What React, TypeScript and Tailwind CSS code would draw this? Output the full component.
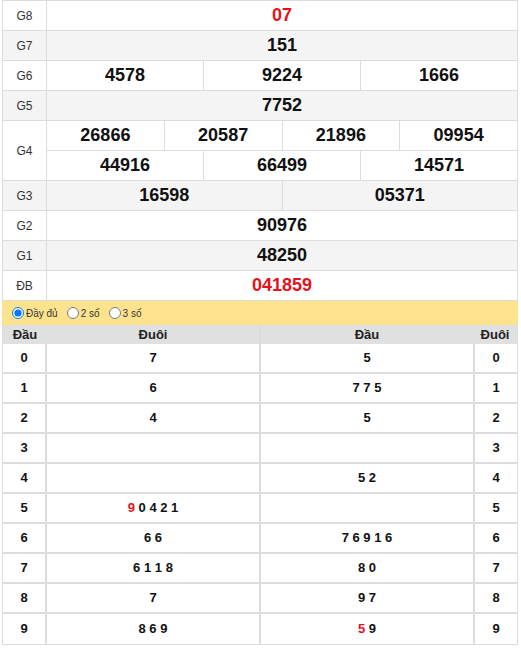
import React from "react";

const B = "border-[#dcdcdc]";

function PrizeRow({
  label,
  values,
  gray,
  red,
}: {
  label: string;
  values: string[];
  gray?: boolean;
  red?: boolean;
}) {
  return (
    <div className={`flex h-[30px] border-b ${B} ${gray ? "bg-[#f4f4f4]" : "bg-white"}`}>
      <div className={`w-[44px] shrink-0 border-r ${B} flex items-center justify-center text-[12px] text-[#333]`}>
        {label}
      </div>
      <div className="flex flex-1">
        {values.map((v, i) => (
          <div
            key={i}
            className={`flex-1 flex items-center justify-center text-[18px] font-bold ${red ? "text-[#e8101a]" : "text-[#111]"} ${
              i < values.length - 1 ? `border-r ${B}` : ""
            }`}
          >
            {v}
          </div>
        ))}
      </div>
    </div>
  );
}

type Cell = { red?: string; rest: string };

function LotoTable({
  rows,
  headLeft,
  headRight,
  side,
}: {
  rows: { k: string; v: Cell }[];
  headLeft: string;
  headRight: string;
  side: "left" | "right";
}) {
  return (
    <div className={`w-[258px] border-l border-r border-b ${B}`}>
      <div className="flex h-[19px] bg-[#e0e0e0] text-[13px] font-bold text-[#222]">
        {side === "left" ? (
          <>
            <div className="w-[44px] flex items-center justify-center">{headLeft}</div>
            <div className="flex-1 flex items-center justify-center">{headRight}</div>
          </>
        ) : (
          <>
            <div className="flex-1 flex items-center justify-center">{headLeft}</div>
            <div className="w-[44px] flex items-center justify-center">{headRight}</div>
          </>
        )}
      </div>
      {rows.map((r, i) => {
        const val = (
          <div className="flex-1 flex items-center justify-center text-[13px] font-bold text-[#111]">
            {r.v.red ? <span className="text-[#e8101a]">{r.v.red}&nbsp;</span> : null}
            {r.v.rest}
          </div>
        );
        const key = (
          <div
            className={`w-[44px] flex items-center justify-center text-[13px] font-bold text-[#111] ${
              side === "left" ? `border-r-2 ${B}` : `border-l-2 ${B}`
            }`}
          >
            {r.k}
          </div>
        );
        return (
          <div
            key={i}
            className={`flex h-[30px] bg-white ${i < rows.length - 1 ? `border-b-2 ${B}` : ""}`}
          >
            {side === "left" ? (
              <>
                {key}
                {val}
              </>
            ) : (
              <>
                {val}
                {key}
              </>
            )}
          </div>
        );
      })}
    </div>
  );
}

export default function App() {
  const left: { k: string; v: Cell }[] = [
    { k: "0", v: { rest: "7" } },
    { k: "1", v: { rest: "6" } },
    { k: "2", v: { rest: "4" } },
    { k: "3", v: { rest: "" } },
    { k: "4", v: { rest: "" } },
    { k: "5", v: { red: "9", rest: "0 4 2 1" } },
    { k: "6", v: { rest: "6 6" } },
    { k: "7", v: { rest: "6 1 1 8" } },
    { k: "8", v: { rest: "7" } },
    { k: "9", v: { rest: "8 6 9" } },
  ];
  const right: { k: string; v: Cell }[] = [
    { k: "0", v: { rest: "5" } },
    { k: "1", v: { rest: "7 7 5" } },
    { k: "2", v: { rest: "5" } },
    { k: "3", v: { rest: "" } },
    { k: "4", v: { rest: "5 2" } },
    { k: "5", v: { rest: "" } },
    { k: "6", v: { rest: "7 6 9 1 6" } },
    { k: "7", v: { rest: "8 0" } },
    { k: "8", v: { rest: "9 7" } },
    { k: "9", v: { red: "5", rest: "9" } },
  ];

  return (
    <div
      className="w-[521px] h-[650px] bg-white pl-[2px] pt-0"
      style={{ fontFamily: '"Liberation Sans", Arial, sans-serif' }}
    >
      <div className={`w-[516px] border-l border-r border-t ${B}`}>
        <PrizeRow label="G8" values={["07"]} red />
        <PrizeRow label="G7" values={["151"]} gray />
        <PrizeRow label="G6" values={["4578", "9224", "1666"]} />
        <PrizeRow label="G5" values={["7752"]} gray />
        <div className={`flex h-[60px] border-b ${B} bg-white`}>
          <div className={`w-[44px] shrink-0 border-r ${B} flex items-center justify-center text-[12px] text-[#333]`}>
            G4
          </div>
          <div className="flex flex-1 flex-col">
            <div className={`flex h-[30px] border-b ${B}`}>
              {["26866", "20587", "21896", "09954"].map((v, i) => (
                <div
                  key={i}
                  className={`flex-1 flex items-center justify-center text-[18px] font-bold text-[#111] ${
                    i < 3 ? `border-r ${B}` : ""
                  }`}
                >
                  {v}
                </div>
              ))}
            </div>
            <div className="flex h-[29px]">
              {["44916", "66499", "14571"].map((v, i) => (
                <div
                  key={i}
                  className={`flex-1 flex items-center justify-center text-[18px] font-bold text-[#111] ${
                    i < 2 ? `border-r ${B}` : ""
                  }`}
                >
                  {v}
                </div>
              ))}
            </div>
          </div>
        </div>
        <PrizeRow label="G3" values={["16598", "05371"]} gray />
        <PrizeRow label="G2" values={["90976"]} />
        <PrizeRow label="G1" values={["48250"]} gray />
        <PrizeRow label="ĐB" values={["041859"]} red />
      </div>
      <div className="w-[516px] h-[24px] bg-[#fee38f] flex items-center gap-[9px] pl-[10px] text-[10px] text-[#333]">
        <label className="flex items-center gap-[2px]">
          <input type="radio" name="m" defaultChecked className="w-[12px] h-[12px] m-0" />
          <span>Đầy đủ</span>
        </label>
        <label className="flex items-center gap-[2px]">
          <input type="radio" name="m" className="w-[12px] h-[12px] m-0" />
          <span>2 số</span>
        </label>
        <label className="flex items-center gap-[2px]">
          <input type="radio" name="m" className="w-[12px] h-[12px] m-0" />
          <span>3 số</span>
        </label>
      </div>
      <div className="flex w-[516px] justify-between">
        <LotoTable rows={left} headLeft="Đầu" headRight="Đuôi" side="left" />
        <LotoTable rows={right} headLeft="Đầu" headRight="Đuôi" side="right" />
      </div>
    </div>
  );
}
